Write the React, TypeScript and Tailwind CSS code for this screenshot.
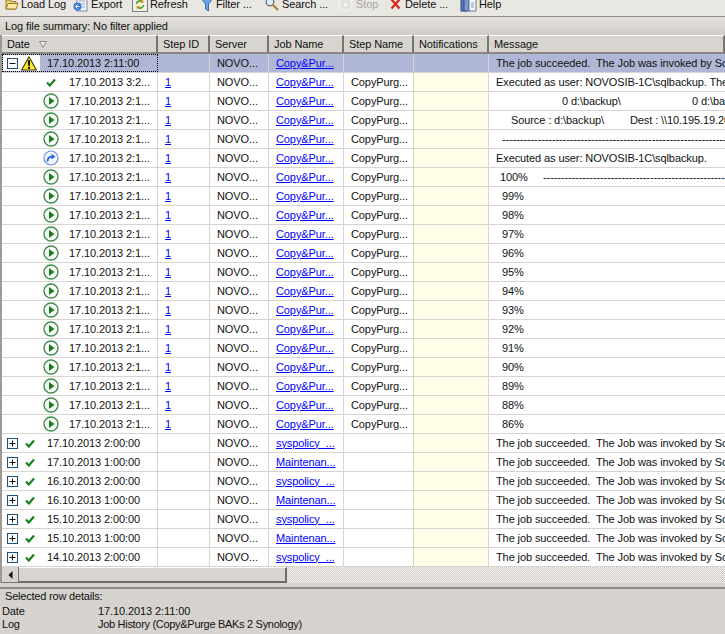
import type { ReactNode } from 'react'

const gridCols = 'grid grid-cols-[156px_52px_59px_75px_70px_75px_1fr]'

function PlayIcon() {
  return (
    <svg width="16" height="16" viewBox="0 0 16 16">
      <circle cx="8" cy="8" r="7" fill="#fbfdf9" stroke="#3f8f4f" strokeWidth="1.4" />
      <path d="M6 4l5.5 4L6 12z" fill="#1d7a22" />
    </svg>
  )
}

function RedoIcon() {
  return (
    <svg width="16" height="16" viewBox="0 0 16 16">
      <circle cx="8" cy="8" r="7" fill="#f3f7ff" stroke="#6f8fd8" strokeWidth="1.2" />
      <path d="M4.5 11.5c0-3.500 2-4.800 5-4.800" fill="none" stroke="#2a62d8" strokeWidth="1.800" />
      <path d="M8.500 3.800l4 2.900-4 2.900z" fill="#2a62d8" />
    </svg>
  )
}

function Check() {
  return (
    <svg width="10" height="9" viewBox="0 0 10 9">
      <path d="M1 4.500l2.800 3L9 1.500" fill="none" stroke="#16801f" strokeWidth="2.200" />
    </svg>
  )
}

function Warning() {
  return (
    <svg width="16" height="15" viewBox="0 0 16 15">
      <path d="M8 .8L15.400 14H.6z" fill="#fde82a" stroke="#3a3608" strokeWidth="1.100" strokeLinejoin="round" />
      <path d="M6.800 4.200h2.400L8.700 10H7.300z" fill="#000" />
      <rect x="7" y="10.800" width="2" height="2" fill="#000" />
    </svg>
  )
}

function TreeBox({ open }: { open: boolean }) {
  return (
    <svg width="11" height="11" viewBox="0 0 11 11" className="shrink-0">
      <rect x=".5" y=".5" width="10" height="10" fill="#fff" stroke="#1f4e79" />
      <path d="M2.500 5.500h6" stroke="#111" />
      {!open && <path d="M5.500 2.500v6" stroke="#111" />}
    </svg>
  )
}

const toolIcons: Record<string, ReactNode> = {
  folder: (
    <svg width="14" height="14" viewBox="0 0 14 14">
      <path d="M1 3h4l1 1.500h5V12H1z" fill="#f0d078" stroke="#9a7a2a" />
      <path d="M3 6.500h10L11 12H1z" fill="#fbe7a0" stroke="#9a7a2a" />
    </svg>
  ),
  export: (
    <svg width="15" height="15" viewBox="0 0 15 15">
      <rect x="4" y="1" width="10" height="13" fill="#eef2f8" stroke="#7c8ca8" />
      <path d="M6 4h6M6 7h6M6 10h6" stroke="#9aa8c0" />
      <circle cx="4.500" cy="9.500" r="4" fill="#3a78d8" />
      <path d="M6.500 9.500h-3.500M4.500 7.500l-2 2 2 2" fill="none" stroke="#fff" />
    </svg>
  ),
  refresh: (
    <svg width="16" height="15" viewBox="0 0 16 15">
      <rect x=".5" y="1.500" width="15" height="13" fill="#f3efdc" stroke="#6f7f9f" />
      <path d="M4.500 7a3.500 3.500 0 0 1 6-2M11.500 8a3.500 3.500 0 0 1-6 2" fill="none" stroke="#3f9a2a" strokeWidth="1.600" />
      <path d="M11.500 2.500v3.500H8zM4.500 12.500V9H8z" fill="#d8a020" />
    </svg>
  ),
  filter: (
    <svg width="14" height="15" viewBox="0 0 14 15">
      <path d="M1 1h12L8.500 7v7l-3-2V7z" fill="#6fa4e8" stroke="#3a6cb0" />
    </svg>
  ),
  search: (
    <svg width="14" height="14" viewBox="0 0 14 14">
      <circle cx="5" cy="5" r="3.800" fill="#dcecf8" stroke="#7a7a7a" strokeWidth="1.400" />
      <path d="M8 8l5 5" stroke="#a8853a" strokeWidth="2.200" />
    </svg>
  ),
  stop: (
    <svg width="15" height="15" viewBox="0 0 15 15">
      <circle cx="7.500" cy="7.500" r="6.500" fill="#e6e4df" stroke="#f1f0ec" strokeWidth="1.500" />
      <rect x="5" y="5" width="5" height="5" fill="#f4f3f0" stroke="#dcdad5" />
    </svg>
  ),
  del: (
    <svg width="11" height="12" viewBox="0 0 11 12">
      <path d="M1.500 1.500l8 9M9.500 1.500l-8 9" stroke="#d8261c" strokeWidth="2.200" />
    </svg>
  ),
  help: (
    <svg width="17" height="16" viewBox="0 0 17 16">
      <rect x="1" y="1" width="5" height="14" fill="#5a78b8" stroke="#33508c" />
      <rect x="4" y="1" width="5" height="14" fill="#7f9ad0" stroke="#33508c" />
      <path d="M9 2h5l2 2v11H9z" fill="#f6f8fc" stroke="#6a7a98" />
      <path d="M11 7h3M11 9h3M11 11h3" stroke="#8a98b0" />
    </svg>
  ),
}

const tools = [
  { icon: 'folder', label: 'Load Log', w: 'w-[68px]', text: 'ml-[2px]' },
  { icon: 'export', label: 'Export', w: 'w-[59px]', text: 'ml-[3px]' },
  { icon: 'refresh', label: 'Refresh', w: 'w-[68px]', text: 'ml-[2px]' },
  { icon: 'filter', label: 'Filter ...', w: 'w-[65px]', text: 'ml-[2px]' },
  { icon: 'search', label: 'Search ...', w: 'w-[73px]', text: 'ml-[3px]' },
  { icon: 'stop', label: 'Stop', w: 'w-[52px]', text: 'ml-[3px] text-[#a8a6a0]' },
  { icon: 'del', label: 'Delete ...', w: 'w-[70px]', text: 'ml-[4px]' },
  { icon: 'help', label: 'Help', w: 'w-[60px]', text: 'ml-[2px]' },
]

const headers = ['Date', 'Step ID', 'Server', 'Job Name', 'Step Name', 'Notifications', 'Message']

function Cell({ children, className = 'pl-[7px]' }: { children?: ReactNode; className?: string }) {
  return (
    <div className={`flex items-center overflow-hidden whitespace-pre border-r border-[#d8d5d0] ${className}`}>
      {children}
    </div>
  )
}

function Msg({ children }: { children: ReactNode }) {
  return <div className="flex items-center overflow-hidden whitespace-pre pl-[7px]">{children}</div>
}

const jobLink = 'text-[#0000ff] underline'

function StepRow({ date, icon, msg }: { date: string; icon: ReactNode; msg: ReactNode }) {
  return (
    <div className={`${gridCols} h-[19px] shrink-0 border-b border-[#d8d5d0]`}>
      <Cell className="pl-[41px]">
        <span className="mr-[10px] flex w-[16px] shrink-0 justify-center">{icon}</span>
        {date}
      </Cell>
      <Cell><span className={jobLink}>1</span></Cell>
      <Cell>NOVO...</Cell>
      <Cell><span className={jobLink}>Copy&amp;Pur...</span></Cell>
      <Cell>CopyPurg...</Cell>
      <Cell className="bg-[#fffde8]" />
      <Msg>{msg}</Msg>
    </div>
  )
}

const succeeded = 'The job succeeded.  The Job was invoked by Schedule 12 (Daily)'

const percents = [99, 98, 97, 96, 95, 94, 93, 92, 91, 90, 89, 88, 86]

const jobs = [
  ['17.10.2013 2:00:00', 'syspolicy_...'],
  ['17.10.2013 1:00:00', 'Maintenan...'],
  ['16.10.2013 2:00:00', 'syspolicy_...'],
  ['16.10.2013 1:00:00', 'Maintenan...'],
  ['15.10.2013 2:00:00', 'syspolicy_...'],
  ['15.10.2013 1:00:00', 'Maintenan...'],
  ['14.10.2013 2:00:00', 'syspolicy_...'],
]

export default function App() {
  return (
    <div className="flex h-[634px] w-[725px] flex-col overflow-hidden bg-[#d6d3ce] font-['Liberation_Sans',sans-serif] text-[11px] leading-none tracking-[-0.1px] text-[#111]">
      {/* Toolbar, cut off at the top of the shot */}
      <div className="h-[17px] shrink-0 overflow-hidden border-b border-[#8f8c86] bg-[#e9e7e2]">
        <div className="-mt-[4px] flex h-[16px] items-center pl-[5px]">
          {tools.map((t) => (
            <div key={t.label} className={`flex shrink-0 items-center ${t.w}`}>
              {toolIcons[t.icon]}
              <span className={t.text}>{t.label}</span>
            </div>
          ))}
        </div>
      </div>

      <div className="flex h-[18px] shrink-0 items-center bg-gradient-to-b from-[#e4e2dd] to-[#cfccc6] pl-[5px]">
        Log file summary: No filter applied
      </div>

      <div className="flex h-[548px] shrink-0 flex-col border-l-2 border-[#9c9a94] bg-white">
        {/* Column headers */}
        <div className={`${gridCols} h-[19px] shrink-0 bg-[#d8d5d0]`}>
          {headers.map((h) => (
            <div
              key={h}
              className="flex items-center gap-[9px] border-t border-r-2 border-b-2 border-t-white border-r-[#77756f] border-b-[#8a8880] pl-[5px]"
            >
              {h}
              {h === 'Date' && (
                <svg width="8" height="7" viewBox="0 0 8 7">
                  <path d="M.5.500h7L4 6.500z" fill="#e8e6e2" stroke="#8f8d88" />
                </svg>
              )}
            </div>
          ))}
        </div>

        {/* Selected job row */}
        <div className={`${gridCols} h-[19px] shrink-0 border-b border-[#d8d5d0] bg-[#b0b7d6]`}>
          <div className="flex items-center overflow-hidden whitespace-pre border border-dotted border-black">
            <span className="flex h-full w-[37px] shrink-0 items-center gap-[3px] bg-white pl-[4px]">
              <TreeBox open />
              <Warning />
            </span>
            <span className="pl-[7px]">17.10.2013 2:11:00</span>
          </div>
          <Cell />
          <Cell>NOVO...</Cell>
          <Cell><span className={jobLink}>Copy&amp;Pur...</span></Cell>
          <Cell />
          <Cell />
          <Msg>{succeeded}</Msg>
        </div>

        <StepRow date="17.10.2013 3:2..." icon={<Check />} msg="Executed as user: NOVOSIB-1C\sqlbackup. The step succeeded" />
        <StepRow
          date="17.10.2013 2:1..."
          icon={<PlayIcon />}
          msg={
            <>
              <span className="ml-[66px] w-[130px] shrink-0">0 d:\backup\</span>
              <span>0 d:\backup\</span>
            </>
          }
        />
        <StepRow
          date="17.10.2013 2:1..."
          icon={<PlayIcon />}
          msg={
            <>
              <span className="ml-[15px] w-[119px] shrink-0">Source : d:\backup\</span>
              <span>Dest : \\10.195.19.20\backup</span>
            </>
          }
        />
        <StepRow
          date="17.10.2013 2:1..."
          icon={<PlayIcon />}
          msg={<span className="ml-[6px]">{'-'.repeat(70)}</span>}
        />
        <StepRow date="17.10.2013 2:1..." icon={<RedoIcon />} msg="Executed as user: NOVOSIB-1C\sqlbackup." />
        <StepRow
          date="17.10.2013 2:1..."
          icon={<PlayIcon />}
          msg={
            <>
              <span className="ml-[4px] w-[43px] shrink-0">100%</span>
              <span>{'-'.repeat(60)}</span>
            </>
          }
        />
        {percents.map((p) => (
          <StepRow
            key={p}
            date="17.10.2013 2:1..."
            icon={<PlayIcon />}
            msg={<span className="ml-[6px]">{p}%</span>}
          />
        ))}

        {jobs.map(([date, job]) => (
          <div key={date} className={`${gridCols} h-[19px] shrink-0 border-b border-[#d8d5d0]`}>
            <Cell className="gap-[7px] pl-[5px]">
              <TreeBox open={false} />
              <Check />
              <span className="pl-[5px]">{date}</span>
            </Cell>
            <Cell />
            <Cell>NOVO...</Cell>
            <Cell><span className={jobLink}>{job}</span></Cell>
            <Cell />
            <Cell className="bg-[#fffde8]" />
            <Msg>{succeeded}</Msg>
          </div>
        ))}

        {/* Horizontal scrollbar */}
        <div className="flex h-[16px] shrink-0 bg-[repeating-conic-gradient(#f4f3f0_0_25%,#cfccc7_0_50%)] bg-[length:2px_2px]">
          <div className="flex w-[17px] items-center justify-center border-r border-b border-[#77756f] bg-[#d8d5d0]">
            <svg width="5" height="8" viewBox="0 0 5 8">
              <path d="M4.500 0v8L.5 4z" fill="#111" />
            </svg>
          </div>
          <div className="w-[268px] border-t border-r-2 border-b-2 border-t-white border-r-[#6f6d68] border-b-[#6f6d68] bg-[#d8d5d0]" />
        </div>
      </div>

      {/* Selected row details */}
      <div className="mt-[4px] flex grow flex-col border-t-2 border-[#8f8c86] tracking-[-0.2px]">
        <div className="pb-[2px] pl-[5px] leading-[14px]">Selected row details:</div>
        <div className="grid grid-cols-[96px_1fr] pl-[2px] leading-[13px]">
          <span className="tracking-[-0.1px]">Date</span>
          <span className="tracking-[-0.1px]">17.10.2013 2:11:00</span>
          <span>Log</span>
          <span className="tracking-[-0.3px]">Job History (Copy&amp;Purge BAKs 2 Synology)</span>
        </div>
      </div>
    </div>
  )
}
